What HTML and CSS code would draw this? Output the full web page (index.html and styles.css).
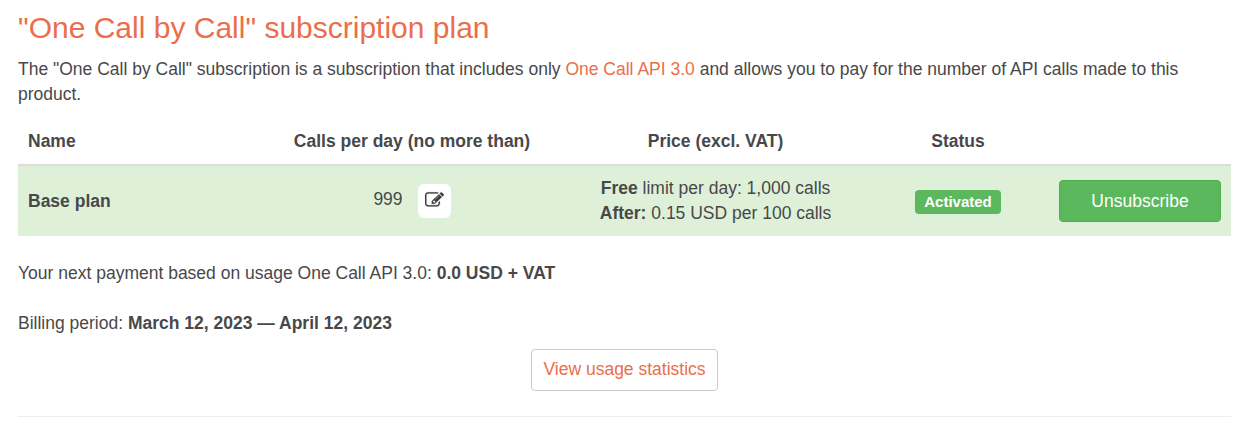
FILE: index.html
```html
<!DOCTYPE html>
<html lang="en">
<head>
    <meta charset="UTF-8">
    <meta name="viewport" content="width=device-width, initial-scale=1.0">
    <title>Subscription plan</title>
    <link rel="stylesheet" href="styles.css">
</head>
<body>
    <div class="container">
        <h2>"One Call by Call" subscription plan</h2>
        <p class="intro">The "One Call by Call" subscription is a subscription that includes only <a href="#">One Call API 3.0</a> and allows you to pay for the number of API calls made to this product.</p>

        <table class="plans">
            <thead>
                <tr>
                    <th class="name">Name</th>
                    <th class="calls">Calls per day (no more than)</th>
                    <th class="price">Price (excl. VAT)</th>
                    <th class="status">Status</th>
                    <th class="action"></th>
                </tr>
            </thead>
            <tbody>
                <tr>
                    <td class="name"><b>Base plan</b></td>
                    <td class="calls">
                        <div class="limit">
                            <span>999</span>
                            <button type="button" class="edit" aria-label="Edit">
                                <svg width="19" height="18" viewBox="0 0 1792 1792" preserveAspectRatio="none" fill="#3c3a3a" stroke="#3c3a3a" stroke-width="20"><path d="M888 1184l116-116-152-152-116 116v56h96v96h56zm440-720q-16-16-33 1l-350 350q-17 17-1 33t33-1l350-350q17-17 1-33zm80 594v190q0 119-84.500 203.500t-203.500 84.500h-832q-119 0-203.500-84.500t-84.500-203.500v-832q0-119 84.500-203.500t203.500-84.500h832q63 0 117 25 15 7 18 23 3 17-9 29l-49 49q-14 14-32 8-23-6-45-6h-832q-66 0-113 47t-47 113v832q0 66 47 113t113 47h832q66 0 113-47t47-113v-126q0-13 9-22l64-64q15-15 35-7t20 29zm-96-738l288 288-672 672h-288v-288zm444 132l-92 92-288-288 92-92q28-28 68-28t68 28l152 152q28 28 28 68t-28 68z"/></svg>
                            </button>
                        </div>
                    </td>
                    <td class="price"><b>Free</b> limit per day: 1,000 calls<br><b>After:</b> 0.15 USD per 100 calls</td>
                    <td class="status"><span class="label">Activated</span></td>
                    <td class="action"><button type="button" class="btn btn-success">Unsubscribe</button></td>
                </tr>
            </tbody>
        </table>

        <p class="payment">Your next payment based on usage One Call API 3.0: <b>0.0 USD + VAT</b></p>
        <p class="period">Billing period: <b>March 12, 2023 — April 12, 2023</b></p>
        <div class="stats">
            <a href="#" class="btn btn-default">View usage statistics</a>
        </div>
        <hr>
    </div>
</body>
</html>
```

FILE: styles.css
```css
* {
    box-sizing: border-box;
}

body {
    margin: 0;
    background: #fff;
    color: #48484a;
    font-family: "Liberation Sans", Arial, sans-serif;
    font-size: 17.5px;
    line-height: 25px;
}

.container {
    padding: 8px 10px 0 18px;
}

h2 {
    margin: 0 0 9px;
    color: #eb6e4b;
    font-size: 30px;
    font-weight: normal;
    line-height: 40px;
}

p {
    margin: 0;
}

a {
    color: #eb6e4b;
    text-decoration: none;
}

.plans {
    width: 100%;
    margin-top: 9px;
    border-collapse: collapse;
    table-layout: fixed;
}

.plans th,
.plans td {
    padding: 0 10px;
    text-align: center;
}

.plans th {
    height: 49px;
    padding-top: 2px;
    border-bottom: 2px solid #ddd;
}

.plans td {
    height: 71px;
    background: #dff0d8;
}

.plans .name {
    width: 242px;
    text-align: left;
}

.plans .calls {
    width: 304px;
}

.plans .price {
    width: 303px;
}

.plans .status {
    width: 182px;
}

.plans .action {
    text-align: right;
}

.limit {
    display: flex;
    justify-content: center;
    align-items: center;
    gap: 15px;
}

.limit span {
    padding-bottom: 3px;
}

.edit {
    width: 33px;
    height: 34px;
    padding: 5px 7px 8px;
    border: none;
    border-radius: 6px;
    background: #fff;
}

.edit svg {
    display: block;
}

.label {
    display: inline-block;
    padding: 0 9px;
    border-radius: 4px;
    background: #5cb85c;
    color: #fff;
    font-size: 15px;
    font-weight: bold;
    line-height: 24px;
}

.btn {
    display: inline-block;
    height: 42px;
    border: 1px solid #ccc;
    border-radius: 4px;
    font-family: inherit;
    font-size: 17.5px;
    line-height: 38px;
    text-align: center;
}

.btn-success {
    width: 162px;
    border-color: #4cae4c;
    background: #5cb85c;
    color: #fff;
}

.btn-default {
    width: 187px;
    background: #fff;
}

.payment {
    margin: 25px 0;
}

.stats {
    display: flex;
    justify-content: center;
    margin-top: 13px;
}

hr {
    margin: 25px 0 0;
    border: 0;
    border-top: 1px solid #eee;
}
```
